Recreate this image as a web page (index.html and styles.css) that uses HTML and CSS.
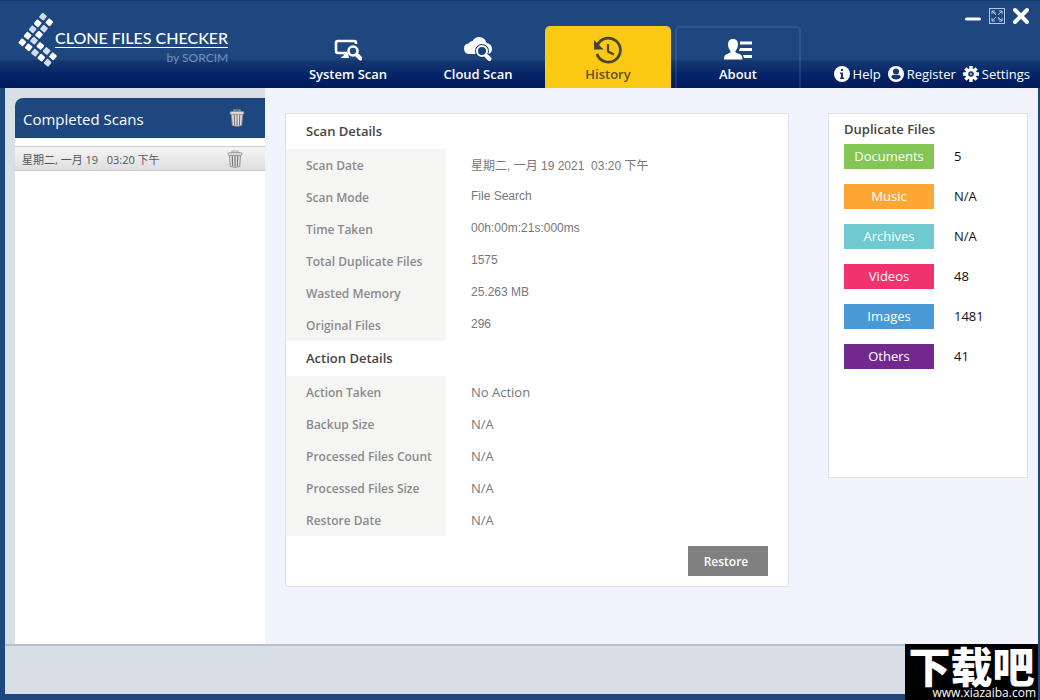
FILE: index.html
```
<!DOCTYPE html>
<html lang="en">

<head>
    <meta charset="UTF-8">
    <meta name="viewport" content="width=device-width, initial-scale=1.0">
    <title>Clone Files Checker</title>
    <link rel="stylesheet" href="styles.css">
</head>

<body>
    <svg class="defs" width="0" height="0">
        <symbol id="trash" viewBox="0 0 16 18">
            <path d="M5 2.5V1h6v1.5" fill="none" stroke="#aaa" stroke-width="1.2" />
            <path d="M2.5 5h11l-.8 11.5q-4.7 1.5-9.4 0z" fill="#e6e6e6" stroke="#8d8d8d" />
            <path d="M5.3 6l.3 10M8 6v10.5M10.7 6l-.3 10" fill="none" stroke="#777" stroke-width="1.2" />
            <rect x="1" y="2.5" width="14" height="3" rx="1.5" fill="#d8d8d8" stroke="#909090" stroke-width=".8" />
        </symbol>
    </svg>
    <div class="app">
        <header class="header">
            <a href="#" class="logo">
                <svg class="logo-mark" viewBox="54 36 120 168" fill="#fff">
                    <defs>
                        <rect id="tile" x="-9" y="-9" width="18" height="18" rx="3" transform="rotate(40)" />
                    </defs>
                    <use href="#tile" transform="translate(129 50)" fill="#d3dbee" />
                    <use href="#tile" transform="translate(148 67)" />
                    <use href="#tile" transform="translate(113 70)" />
                    <use href="#tile" transform="translate(132 86)" fill="#d3dbee" />
                    <use href="#tile" transform="translate(98 88)" fill="#d3dbee" />
                    <use href="#tile" transform="translate(117 104)" />
                    <use href="#tile" transform="translate(83 107)" />
                    <use href="#tile" transform="translate(102 122)" fill="#d3dbee" />
                    <use href="#tile" transform="translate(67 127)" />
                    <use href="#tile" transform="translate(86 142)" />
                    <use href="#tile" transform="translate(121 138)" />
                    <use href="#tile" transform="translate(105 158)" fill="#d3dbee" />
                    <use href="#tile" transform="translate(140 153)" fill="#d3dbee" />
                    <use href="#tile" transform="translate(124 173)" />
                    <use href="#tile" transform="translate(159 169)" />
                    <use href="#tile" transform="translate(143 188)" fill="#d3dbee" />
                </svg>
                <span class="logo-text">
                    <span class="logo-name">CLONE FILES CHECKER</span>
                    <span class="logo-by">by SORCIM</span>
                </span>
            </a>
            <nav class="tabs">
                <a href="#" class="tab">
                    <svg width="28" height="24" viewBox="0 0 28 24">
                        <path d="M13 15H4Q2 15 2 13V5Q2 3 4 3H20Q22 3 22 5V6" fill="none" stroke="#fff" stroke-width="2.6" />
                        <path d="M10 15h4l1 5H7q0-1.5 2.5-2z" fill="#fff" />
                        <circle cx="19" cy="13" r="4.5" fill="none" stroke="#fff" stroke-width="2.6" />
                        <path d="M22.5 16.5l4 4" stroke="#fff" stroke-width="4" stroke-linecap="round" />
                    </svg>
                    System Scan
                </a>
                <a href="#" class="tab">
                    <svg width="30" height="26" viewBox="0 0 30 26">
                        <path d="M7 18Q1 18 1 12.5 1 8 5.500 7.500 6.500 5 9.500 5 12 1 16 1q6 0 7.500 6Q29 8 29 13q0 5-5 5z" fill="#fff" />
                        <circle cx="19" cy="15" r="7" fill="#173c76" />
                        <circle cx="19" cy="15" r="5" fill="#1b4179" stroke="#fff" stroke-width="2" />
                        <path d="M23 19.5l3.500 3.500" stroke="#fff" stroke-width="4" stroke-linecap="round" />
                    </svg>
                    Cloud Scan
                </a>
                <a href="#" class="tab active">
                    <svg width="30" height="28" viewBox="0 0 30 28">
                        <path d="M4.5 9A12 12 0 1 1 4 18" fill="none" stroke="#4a452a" stroke-width="2.8" />
                        <path d="M1 4v9.5h9.500z" fill="#4a452a" />
                        <path d="M15 8v7.5l6 3" fill="none" stroke="#4a452a" stroke-width="2.2" />
                    </svg>
                    History
                </a>
                <a href="#" class="tab outlined">
                    <svg width="28" height="24" viewBox="0 0 28 24" fill="#fff">
                        <path d="M9 1q5 0 5 5.500 0 4-2.500 6.500v1.500l5 2q2 1 2 5H0q0-4 2-5l4.500-2V13Q4 10.500 4 6.500 4 1 9 1z" />
                        <path d="M16 3.500h12v3H16zM16 10h12v3H15zM19 17h9v3h-8z" />
                    </svg>
                    About
                </a>
            </nav>
            <div class="header-side">
                <div class="window-buttons">
                    <button type="button" aria-label="Minimize">
                        <svg width="18" height="18" viewBox="0 0 18 18">
                            <path d="M2.5 12h13" stroke="#fff" stroke-width="3" stroke-linecap="round" />
                        </svg>
                    </button>
                    <button type="button" aria-label="Maximize">
                        <svg width="18" height="18" viewBox="0 0 18 18" fill="none" stroke="#b4c8e6">
                            <rect x="1.5" y="1.5" width="15" height="15" />
                            <path d="M4 7V4h3M11 4h3v3M14 11v3h-3M7 14H4v-3M4 4l4 4M14 4l-4 4M14 14l-4-4M4 14l4-4M6 6h2M10 12h2" />
                        </svg>
                    </button>
                    <button type="button" aria-label="Close">
                        <svg width="18" height="18" viewBox="0 0 18 18">
                            <path d="M3 3l12 12M15 3L3 15" stroke="#fff" stroke-width="4" stroke-linecap="round" />
                        </svg>
                    </button>
                </div>
                <div class="links">
                    <a href="#">
                        <svg width="16" height="16" viewBox="0 0 16 16">
                            <circle cx="8" cy="8" r="8" fill="#fff" />
                            <path d="M6 6.500h3v5h1V13H6v-1.500h1V8H6zM7 3h2v2H7z" fill="#17376f" />
                        </svg>
                        Help
                    </a>
                    <a href="#">
                        <svg width="16" height="16" viewBox="0 0 16 16">
                            <circle cx="8" cy="8" r="8" fill="#fff" />
                            <circle cx="8" cy="5.5" r="3" fill="#17376f" />
                            <path d="M3 11q1-2.500 3-2.500 2 1.500 4 0 2 0 3 2.500-2 2.500-5 2.500T3 11z" fill="#17376f" />
                        </svg>
                        Register
                    </a>
                    <a href="#">
                        <svg width="16" height="16" viewBox="0 0 16 16">
                            <path d="M8 0v16M0 8h16M2.400 2.400l11.200 11.200M13.600 2.400L2.400 13.600" stroke="#fff" stroke-width="3.4" />
                            <circle cx="8" cy="8" r="5.8" fill="#fff" />
                            <circle cx="8" cy="8" r="2.8" fill="#17376f" />
                            <circle cx="8" cy="8" r="1.2" fill="#8fa3c8" />
                        </svg>
                        Settings
                    </a>
                </div>
            </div>
        </header>

        <main class="main">
            <aside class="sidebar">
                <div class="scans">
                    <div class="scans-title">
                        <h2>Completed Scans</h2>
                        <button type="button" aria-label="Delete all scans"><svg width="16" height="18"><use href="#trash" /></svg></button>
                    </div>
                    <ul class="scans-list">
                        <li>
                            <a href="#">星期二, 一月 19 &nbsp; 03:20 下午</a>
                            <button type="button" aria-label="Delete scan"><svg width="16" height="18"><use href="#trash" /></svg></button>
                        </li>
                    </ul>
                </div>
            </aside>

            <div class="content">
                <section class="panel details">
                    <h3>Scan Details</h3>
                    <table class="scan-table">
                        <tr><th scope="row">Scan Date</th><td>星期二, 一月 19 2021 &nbsp;03:20 下午</td></tr>
                        <tr><th scope="row">Scan Mode</th><td>File Search</td></tr>
                        <tr><th scope="row">Time Taken</th><td>00h:00m:21s:000ms</td></tr>
                        <tr><th scope="row">Total Duplicate Files</th><td>1575</td></tr>
                        <tr><th scope="row">Wasted Memory</th><td>25.263 MB</td></tr>
                        <tr><th scope="row">Original Files</th><td>296</td></tr>
                    </table>
                    <h3>Action Details</h3>
                    <table class="action-table">
                        <tr><th scope="row">Action Taken</th><td>No Action</td></tr>
                        <tr><th scope="row">Backup Size</th><td>N/A</td></tr>
                        <tr><th scope="row">Processed Files Count</th><td>N/A</td></tr>
                        <tr><th scope="row">Processed Files Size</th><td>N/A</td></tr>
                        <tr><th scope="row">Restore Date</th><td>N/A</td></tr>
                    </table>
                    <button type="button" class="restore">Restore</button>
                </section>

                <section class="panel duplicates">
                    <h3>Duplicate Files</h3>
                    <dl>
                        <dt class="documents">Documents</dt><dd>5</dd>
                        <dt class="music">Music</dt><dd>N/A</dd>
                        <dt class="archives">Archives</dt><dd>N/A</dd>
                        <dt class="videos">Videos</dt><dd>48</dd>
                        <dt class="images">Images</dt><dd>1481</dd>
                        <dt class="others">Others</dt><dd>41</dd>
                    </dl>
                </section>
            </div>
        </main>

        <footer class="footer"></footer>
        <div class="watermark">
            <span class="watermark-name">下载吧</span>
            <span class="watermark-url">www.xiazaiba.com</span>
        </div>
    </div>
</body>

</html>
```
FILE: styles.css
```
* {
    margin: 0;
    padding: 0;
    box-sizing: border-box;
}

body {
    font-family: "Open Sans", "Noto Sans CJK SC", sans-serif;
    font-size: 13px;
    color: #111;
}

a {
    text-decoration: none;
    color: inherit;
}

button {
    border: 0;
    background: none;
    font: inherit;
    cursor: pointer;
}

svg {
    display: block;
}

.defs {
    position: absolute;
}

.app {
    position: relative;
    display: flex;
    flex-direction: column;
    min-height: 100vh;
    background: #1e477f;
}

/* header */
.header {
    display: flex;
    height: 88px;
    border-top: 1px solid #173a6c;
    background: linear-gradient(#1e477f 58px, #15386f 60px, #04246a 74px, #001a58 100%);
}

.logo {
    display: flex;
    width: 285px;
    padding: 11px 0 0 18px;
}

.logo-mark {
    width: 40px;
    height: 56px;
}

.logo-text {
    display: flex;
    flex-direction: column;
    margin-left: -3px;
    padding-top: 16px;
    font-family: Lato, sans-serif;
}

.logo-name {
    height: 20px;
    line-height: 20px;
    border-bottom: 1px solid #fff;
    font-size: 16px;
    font-weight: 500;
    color: #fff;
}

.logo-by {
    line-height: 20px;
    text-align: right;
    font-size: 12px;
    color: #7890bd;
}

.tabs {
    display: flex;
    gap: 4px;
    padding-top: 25px;
}

.tab {
    display: flex;
    flex-direction: column;
    align-items: center;
    justify-content: flex-end;
    gap: 2px;
    width: 126px;
    padding-bottom: 4px;
    line-height: 20px;
    font-weight: 600;
    color: #fff;
}

.tab.active {
    border-radius: 5px 5px 0 0;
    background: #fbc914;
    color: #5f5020;
}

.tab.active svg {
    margin-bottom: -2px;
}

.tab.outlined {
    border: 2px solid rgba(120, 160, 210, .18);
    border-bottom: 0;
    border-radius: 5px 5px 0 0;
}

.header-side {
    display: flex;
    flex-direction: column;
    justify-content: space-between;
    align-items: flex-end;
    margin-left: auto;
    padding: 6px 10px 4px 0;
}

.window-buttons {
    display: flex;
    gap: 6px;
}

.links {
    display: flex;
    gap: 7px;
    line-height: 20px;
    color: #fff;
}

.links a {
    display: flex;
    align-items: center;
    gap: 3px;
}

/* main */
.main {
    display: flex;
    flex: 1;
    margin: 0 2px 0 5px;
    background: #f1f4fd;
}

.sidebar {
    display: flex;
    width: 260px;
    padding: 10px 0 0 10px;
    background: #d9dfe9;
}

.scans {
    flex: 1;
    border-radius: 8px 0 0 0;
    background: #fff;
}

.scans-title {
    display: flex;
    align-items: center;
    justify-content: space-between;
    height: 40px;
    padding: 0 20px 0 8px;
    border-radius: 8px 0 0 0;
    background: #1e477f;
    color: #fff;
}

.scans-title h2 {
    padding-top: 2px;
    font-size: 15px;
    font-weight: 400;
}

.scans-list {
    margin-top: 8px;
    list-style: none;
}

.scans-list li {
    display: flex;
    align-items: center;
    justify-content: space-between;
    height: 25px;
    padding: 0 22px 0 7px;
    border-top: 1px solid #ccc;
    border-bottom: 1px solid #ccc;
    background: linear-gradient(#f5f5f5, #dedede);
    font-size: 11px;
    color: #555;
}

.content {
    display: flex;
    flex: 1;
    align-items: flex-start;
    gap: 39px;
    padding: 25px 10px 25px 20px;
}

.panel {
    border: 1px solid #dfe1e6;
    background: #fff;
}

.panel h3 {
    font-size: 13px;
    font-weight: 600;
    color: #444;
}

.details {
    display: flex;
    flex: 1;
    flex-direction: column;
}

.details h3 {
    padding-left: 20px;
    line-height: 35px;
}

.details table {
    width: 100%;
    border-collapse: collapse;
    color: #777;
}

.details tr {
    height: 32px;
}

.details th {
    width: 160px;
    padding-left: 20px;
    background: #f5f5f4;
    text-align: left;
    font-size: 12px;
    font-weight: 600;
    white-space: nowrap;
    color: #8b8b8b;
}

.details td {
    padding-left: 25px;
}

.scan-table td {
    padding-bottom: 2px;
    font-family: "Liberation Sans", "Noto Sans CJK SC", sans-serif;
    font-size: 12px;
}

.restore {
    align-self: flex-end;
    width: 80px;
    height: 30px;
    margin: 10px 20px;
    padding-right: 4px;
    background: #808080;
    font-size: 12px;
    font-weight: 600;
    color: #fff;
}

.duplicates {
    width: 200px;
    min-height: 365px;
    padding: 0 15px;
}

.duplicates h3 {
    line-height: 30px;
}

.duplicates dl {
    display: grid;
    grid-template-columns: 90px 1fr;
    gap: 15px 20px;
    line-height: 25px;
}

.duplicates dt {
    text-align: center;
    color: #fff;
}

.documents {
    background: #84c654;
}

.music {
    background: #fca733;
}

.archives {
    background: #6fcacf;
}

.videos {
    background: #f0336f;
}

.images {
    background: #4999d6;
}

.others {
    background: #732890;
}

/* footer */
.footer {
    height: 56px;
    margin: 0 2px 0 5px;
    border-top: 2px solid #b8bfca;
    border-bottom: 6px solid #1e477f;
    background: #d8dee8;
}

.watermark {
    position: absolute;
    right: 2px;
    bottom: 0;
    display: flex;
    flex-direction: column;
    width: 133px;
    height: 56px;
    background: #000;
    color: #fff;
}

.watermark-name {
    line-height: 42px;
    text-align: center;
    font-family: "Noto Sans CJK SC", sans-serif;
    font-size: 42px;
    font-weight: 900;
}

.watermark-url {
    padding-right: 2px;
    line-height: 14px;
    text-align: right;
    font-size: 12px;
}
```
